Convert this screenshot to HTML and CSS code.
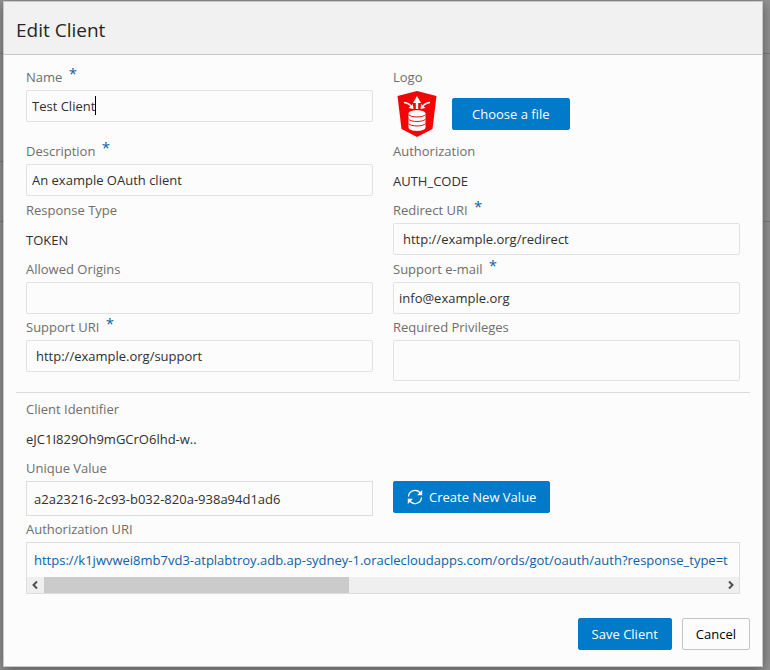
FILE: index.html
```html
<!DOCTYPE html>
<html lang="en">
<head>
<meta charset="utf-8">
<meta name="viewport" content="width=device-width, initial-scale=1">
<title>Edit Client</title>
<link rel="stylesheet" href="styles.css">
</head>
<body>
<main class="dialog" role="dialog" aria-labelledby="dialog-title">
  <header class="dialog-header">
    <h1 class="dialog-title" id="dialog-title">Edit Client</h1>
  </header>
  <form class="dialog-body">
    <div class="fields">
      <div class="field">
        <label class="label" for="name">Name <span class="required">*</span></label>
        <div class="input-wrap">
          <input class="input" id="name" type="text" value="Test Client">
          <span class="caret"></span>
        </div>
      </div>
      <div class="field">
        <span class="label">Logo</span>
        <div class="logo-row">
          <svg class="logo" viewBox="0 0 40 48" aria-hidden="true">
            <path fill="#f30505" d="M20 1 39.500 6 35.500 39 20 47 4.500 39 .5 6Z"/>
            <path fill="#fff" d="M20 6 24 13H21.200V19H18.800V13H16Z"/>
            <path fill="none" stroke="#fff" stroke-width="1.500" d="M7 12.500q5 .5 7.500 4M33 12.500q-5 .5-7.500 4"/>
            <path fill="#fff" d="m16.500 19-5-1 4.300-4ZM23.500 19l5-1-4.300-4Z"/>
            <path fill="#fff" d="M11.500 23.500C11.500 19 28.500 19 28.500 23.500V37.500C28.500 42 11.500 42 11.500 37.500Z"/>
            <path fill="none" stroke="#f30505" stroke-width="1" d="M11.500 24.500c2 3.300 15 3.300 17 0M11.500 29c2 3.300 15 3.300 17 0M11.500 33.500c2 3.300 15 3.300 17 0"/>
          </svg>
          <button class="button button-primary button-file" type="button">Choose a file</button>
        </div>
      </div>
      <div class="field">
        <label class="label" for="description">Description <span class="required">*</span></label>
        <input class="input" id="description" type="text" value="An example OAuth client">
      </div>
      <div class="field">
        <span class="label">Authorization</span>
        <span class="value">AUTH_CODE</span>
      </div>
      <div class="field">
        <span class="label">Response Type</span>
        <span class="value">TOKEN</span>
      </div>
      <div class="field">
        <label class="label" for="redirect">Redirect URI <span class="required">*</span></label>
        <input class="input input-uri" id="redirect" type="text" value="http://example.org/redirect">
      </div>
      <div class="field">
        <label class="label" for="origins">Allowed Origins</label>
        <input class="input" id="origins" type="text">
      </div>
      <div class="field">
        <label class="label" for="email">Support e-mail <span class="required">*</span></label>
        <input class="input" id="email" type="text" value="info@example.org">
      </div>
      <div class="field">
        <label class="label" for="support">Support URI <span class="required">*</span></label>
        <input class="input input-uri" id="support" type="text" value="http://example.org/support">
      </div>
      <div class="field">
        <label class="label" for="privileges">Required Privileges</label>
        <textarea class="input input-area" id="privileges"></textarea>
      </div>
    </div>
    <div class="fields fields-identity">
      <div class="field field-wide">
        <span class="label">Client Identifier</span>
        <span class="value">eJC1I829Oh9mGCrO6lhd-w..</span>
      </div>
      <div class="field">
        <label class="label" for="unique">Unique Value</label>
        <input class="input input-unique" id="unique" type="text" value="a2a23216-2c93-b032-820a-938a94d1ad6">
      </div>
      <div class="field field-action">
        <button class="button button-primary button-create" type="button">
          <svg class="refresh" viewBox="0 0 16 16" aria-hidden="true">
            <path fill="none" stroke="#fff" stroke-width="1.300" d="M1.500 7.500A6.500 6.500 0 0 1 13.500 4.500M14.500 8.500A6.500 6.500 0 0 1 2.500 11.500"/>
            <path fill="#fff" d="M15.200 1v5.300H10ZM.8 15V9.700H6Z"/>
          </svg>
          Create New Value
        </button>
      </div>
      <div class="field field-wide">
        <span class="label">Authorization URI</span>
        <div class="uri-box">
          <a class="uri-link" href="#">https://k1jwvwei8mb7vd3-atplabtroy.adb.ap-sydney-1.oraclecloudapps.com/ords/got/oauth/auth?response_type=t</a>
          <div class="scrollbar" aria-hidden="true">
            <svg class="arrow" viewBox="0 0 17 16"><path d="M10 4.500 6.500 8 10 11.500"/></svg>
            <div class="track"><div class="thumb"></div></div>
            <svg class="arrow" viewBox="0 0 17 16"><path d="M7 4.500 10.500 8 7 11.500"/></svg>
          </div>
        </div>
      </div>
    </div>
    <footer class="actions">
      <button class="button button-primary" type="submit">Save Client</button>
      <button class="button button-plain" type="button">Cancel</button>
    </footer>
  </form>
</main>
</body>
</html>
```
FILE: styles.css
```css
* {
  box-sizing: border-box;
}

html {
  background:
    linear-gradient(#7c7c7c, #7c7c7c) 0 53px / 100% 1px no-repeat,
    linear-gradient(#7c7c7c, #7c7c7c) 0 161px / 50% 1px no-repeat,
    linear-gradient(#7c7c7c, #7c7c7c) 0 221px / 100% 1px no-repeat,
    #929292;
}

body {
  margin: 0;
  padding: 1px 7px 3px 3px;
  font-family: "Open Sans", "Noto Sans", sans-serif;
  font-size: 13px;
  line-height: 20px;
  color: #303030;
}

.dialog {
  border: 1px solid #c8c8c8;
  background: #fcfcfc;
  box-shadow: 0 3px 12px rgba(0, 0, 0, 0.4);
}

.dialog-header {
  padding: 14px 12px 10px;
  border-bottom: 1px solid #c8c8c8;
  background: #f1f1f1;
}

.dialog-title {
  margin: 0;
  font-size: 19px;
  font-weight: 400;
  line-height: 28px;
  color: #262626;
}

.dialog-body {
  padding: 9px 12px 16px;
}

.fields {
  display: grid;
  grid-template-columns: 1fr 1fr;
  column-gap: 20px;
  padding: 0 10px 11px;
}

.fields-identity {
  padding-top: 3px;
  padding-bottom: 24px;
  border-top: 1px solid #dcdcdc;
}

.field {
  display: flex;
  flex-direction: column;
  min-width: 0;
}

.field-wide {
  grid-column: 1 / -1;
}

.field-action {
  padding-top: 26px;
  align-items: flex-start;
}

.label {
  height: 26px;
  line-height: 26px;
  color: #6e6e6e;
}

.required {
  margin-left: 3px;
  font-size: 15px;
  line-height: 16px;
  vertical-align: 3px;
  color: #0a61a8;
}

.input {
  width: 100%;
  height: 32px;
  padding: 0 5px;
  border: 1px solid #e2e2e2;
  border-radius: 2px;
  background: #fcfcfc;
  font: inherit;
  color: inherit;
  outline: none;
}

.input-uri {
  padding: 0 9px;
}

.input-area {
  display: block;
  height: 41px;
  resize: none;
}

.input-unique {
  height: 35px;
  padding: 0 7px;
  border-color: #dadee2;
  border-radius: 0;
}

.input-wrap {
  position: relative;
}

.caret {
  position: absolute;
  top: 6px;
  left: 69px;
  width: 1px;
  height: 19px;
  background: #000;
}

.value {
  height: 33px;
  line-height: 34px;
}

.logo-row {
  display: flex;
  align-items: center;
  gap: 15px;
  height: 48px;
  padding-left: 4px;
}

.logo {
  width: 40px;
  height: 48px;
}

.button {
  display: inline-flex;
  align-items: center;
  justify-content: center;
  height: 32px;
  padding: 0 13px;
  border: 1px solid #c4c4c4;
  border-radius: 2px;
  font: inherit;
  white-space: nowrap;
}

.button-primary {
  border-color: #007ac9;
  background: #007ac9;
  color: #fff;
}

.button-plain {
  background: #fcfcfc;
  color: #000;
}

.button-file {
  padding: 0 19px;
}

.button-create {
  gap: 6px;
}

.refresh {
  width: 16px;
  height: 16px;
}

.uri-box {
  overflow: hidden;
  border: 1px solid #dadee2;
}

.uri-link {
  display: block;
  overflow: hidden;
  padding: 7px 0 7px 7px;
  white-space: nowrap;
  text-decoration: none;
  color: #0a61a8;
}

.scrollbar {
  display: flex;
  height: 16px;
  background: #efefef;
}

.arrow {
  width: 17px;
  height: 16px;
  fill: none;
  stroke: #505050;
  stroke-width: 2;
}

.track {
  flex: 1;
}

.thumb {
  width: 45%;
  height: 100%;
  background: #cbcbcb;
}

.actions {
  display: flex;
  justify-content: flex-end;
  gap: 10px;
}
```
